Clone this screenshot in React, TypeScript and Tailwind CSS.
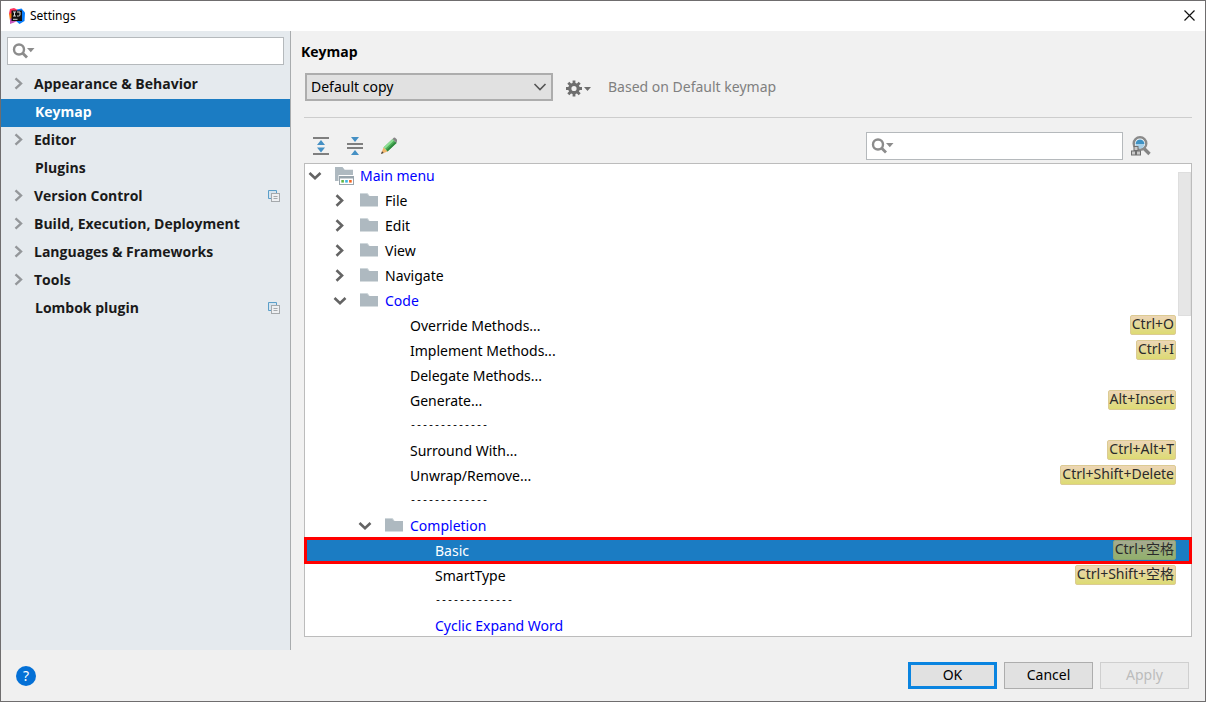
import { useState } from "react";
import clsx from "clsx";

type NavItem = {
  name: string;
  expandable?: boolean;
  project?: boolean; // per-project settings marker
};

type TreeRow = {
  text: string;
  level: number;
  kind: "root" | "folder" | "action" | "separator";
  open?: boolean;
  changed?: boolean;
  shortcut?: string;
};

const NAV: NavItem[] = [
  { name: "Appearance & Behavior", expandable: true },
  { name: "Keymap" },
  { name: "Editor", expandable: true },
  { name: "Plugins" },
  { name: "Version Control", expandable: true, project: true },
  { name: "Build, Execution, Deployment", expandable: true },
  { name: "Languages & Frameworks", expandable: true },
  { name: "Tools", expandable: true },
  { name: "Lombok plugin", project: true },
];

const ROWS: TreeRow[] = [
  { text: "Main menu", level: 0, kind: "root", open: true, changed: true },
  { text: "File", level: 1, kind: "folder" },
  { text: "Edit", level: 1, kind: "folder" },
  { text: "View", level: 1, kind: "folder" },
  { text: "Navigate", level: 1, kind: "folder" },
  { text: "Code", level: 1, kind: "folder", open: true, changed: true },
  { text: "Override Methods...", level: 2, kind: "action", shortcut: "Ctrl+O" },
  { text: "Implement Methods...", level: 2, kind: "action", shortcut: "Ctrl+I" },
  { text: "Delegate Methods...", level: 2, kind: "action" },
  { text: "Generate...", level: 2, kind: "action", shortcut: "Alt+Insert" },
  { text: "-------------", level: 2, kind: "separator" },
  { text: "Surround With...", level: 2, kind: "action", shortcut: "Ctrl+Alt+T" },
  { text: "Unwrap/Remove...", level: 2, kind: "action", shortcut: "Ctrl+Shift+Delete" },
  { text: "-------------", level: 2, kind: "separator" },
  { text: "Completion", level: 2, kind: "folder", open: true, changed: true },
  { text: "Basic", level: 3, kind: "action", changed: true, shortcut: "Ctrl+空格" },
  { text: "SmartType", level: 3, kind: "action", shortcut: "Ctrl+Shift+空格" },
  { text: "-------------", level: 3, kind: "separator" },
  { text: "Cyclic Expand Word", level: 3, kind: "action", changed: true },
];

const BRANCH_INDENT = ["pl-[2px]", "pl-[27px]", "pl-[52px]", "pl-[77px]"];
const LEAF_INDENT = ["pl-[55px]", "pl-[80px]", "pl-[105px]", "pl-[130px]"];

/** ---------------- icons ---------------- */
function AppLogo() {
  return (
    <svg width="16" height="16" viewBox="0 0 16 16" aria-hidden="true">
      <path d="M1 1 5 0 9 2 8 8 2 9 0 5.5Z" fill="#fe315d" />
      <path d="M0 6 3 5 4 11 1 12.5Z" fill="#f97a12" />
      <path d="M8 1.5 12.5.5 16 4.5 15.5 13 10.5 16 7 13Z" fill="#087cfa" />
      <path d="M1 11 4 9 8 13 5 14.5 1 16Z" fill="#c757bc" />
      <rect x="2.5" y="2.5" width="10.5" height="10.5" fill="#111" />
      <path
        d="M4 4h3M5.500 4v4M4 8h3M8 4h3v3q0 1-1.500 1H8M4 11.300h4.500"
        stroke="#d8d8d8"
        strokeWidth="1"
        fill="none"
      />
    </svg>
  );
}

function SearchIcon() {
  return (
    <svg width="24" height="18" viewBox="0 0 24 18" aria-hidden="true">
      <circle cx="7" cy="7.5" r="5" fill="none" stroke="#8c8c8c" strokeWidth="2.4" />
      <path d="m10.5 11 4.5 4.5" stroke="#8c8c8c" strokeWidth="2.8" />
      <path d="M15 6h7.5l-3.7 4.2Z" fill="#8c8c8c" />
    </svg>
  );
}

function Chevron({ open, light }: { open?: boolean; light?: boolean }) {
  return (
    <svg width="16" height="16" viewBox="0 0 16 16" className="shrink-0" aria-hidden="true">
      <path
        d={open ? "m2.500 5 5.500 5.200L13.500 5" : "m4.500 2.300 5.500 5.200-5.500 5.200"}
        fill="none"
        stroke={light ? "#94979a" : "#646464"}
        strokeWidth={light ? 2.4 : 2.6}
      />
    </svg>
  );
}

function FolderIcon() {
  return (
    <svg width="19" height="16" viewBox="0 0 19 16" className="shrink-0" aria-hidden="true">
      <path d="M0 0h7.500l2.200 2.700H0Z" fill="#cfd7db" />
      <path d="M0 1h7l2.200 2H18v10.500H0Z" fill="#aeb9c0" />
    </svg>
  );
}

function MenuFolderIcon() {
  return (
    <svg width="19" height="18" viewBox="0 0 19 18" className="shrink-0" aria-hidden="true">
      <path d="M0 0h7.5l2.2 2.7H18V8H3.5v6H0Z" fill="#aeb9c0" />
      <rect x="4.5" y="9.5" width="14" height="8" fill="#fff" stroke="#98a4ac" />
      <path d="M4 9h15v2.500H4Z" fill="#98a4ac" />
      <path d="M6.300 13h2.600v2.600H6.300Z" fill="#62b543" />
      <path d="M10.200 13h2.600v2.600h-2.600Z" fill="#40b6e0" />
      <path d="M14.100 13h2.600v2.600h-2.600Z" fill="#f26522" />
    </svg>
  );
}

function ProjectIcon() {
  return (
    <svg width="12" height="12" viewBox="0 0 12 12" aria-hidden="true">
      <path d="M3 8.500H.5V.5h8V3" fill="#d6e4ee" stroke="#5b9fc9" />
      <rect x="3.500" y="3.500" width="8" height="8" fill="#eef0f2" stroke="#a5a9ac" />
      <path d="M5.500 6.500h4M5.500 8.500h4" stroke="#a5a9ac" />
    </svg>
  );
}

function GearIcon() {
  return (
    <svg width="26" height="18" viewBox="0 0 26 18" aria-hidden="true">
      <circle cx="8" cy="8.500" r="4.200" fill="none" stroke="#6e6e6e" strokeWidth="3.200" />
      <path
        d="M8 .5V4M8 13v3.500M0 8.500h3.500M12.500 8.500H16M2.300 2.800l2.500 2.500M11.200 11.700l2.500 2.500M2.300 14.200l2.500-2.500M11.200 5.300l2.500-2.500"
        stroke="#6e6e6e"
        strokeWidth="2.800"
      />
      <path d="M18 7h7l-3.500 4Z" fill="#6e6e6e" />
    </svg>
  );
}

function ExpandAllIcon() {
  return (
    <svg width="16" height="18" viewBox="0 0 16 18" aria-hidden="true">
      <path d="M0 1h16M0 17h16" stroke="#7f7f7f" strokeWidth="2" />
      <path d="M8 3 12 8H4ZM8 15.500 12 10.500H4Z" fill="#4590c4" />
    </svg>
  );
}

function CollapseAllIcon() {
  return (
    <svg width="16" height="18" viewBox="0 0 16 18" aria-hidden="true">
      <path d="M0 7h16M0 11h16" stroke="#7f7f7f" strokeWidth="2" />
      <path d="M4 0h8L8 5ZM4 18h8l-4-5Z" fill="#4590c4" />
    </svg>
  );
}

function PencilIcon() {
  return (
    <svg width="16" height="18" viewBox="0 0 16 18" aria-hidden="true">
      <path d="M11.500 2 15.500 6l-9 8.500-4-4Z" fill="#4cae58" />
      <path d="m11.500 2 1.500 1.500-9 8.500-1.500-1.500Z" fill="#8fe096" />
      <path d="m14.200 4.700 1.300 1.300-9 8.500-1.300-1.300Z" fill="#2f8a3e" />
      <path d="m2.500 10.500 4 4L0 17Z" fill="#f0b56a" />
      <path d="M1 14.300 2.700 16 0 17Z" fill="#444" />
      <path d="m11.500 2 1.200-1.200q1-.6 2 .4l1 1q.8 1 .3 1.900L15.500 6Z" fill="#858585" />
    </svg>
  );
}

function FindShortcutIcon() {
  return (
    <svg width="20" height="20" viewBox="0 0 20 20" aria-hidden="true">
      <path d="m13 12.500 5.500 5.500" stroke="#858585" strokeWidth="3.400" />
      <circle cx="9" cy="7.500" r="6.300" fill="#fff" stroke="#8a8a8a" strokeWidth="2.400" />
      <path d="M4.500 8a4.500 4.500 0 0 1 9 0Z" fill="#3f92c4" />
      <path d="M4.500 8h9a4.500 4.500 0 0 1-9 0Z" fill="#a9d0e8" />
      <g fill="#c9c9c9" stroke="#6f6f6f">
        <rect x="3" y="10.500" width="4" height="4" />
        <rect x=".5" y="15" width="4" height="4" />
        <rect x="5.500" y="15" width="4" height="4" />
      </g>
    </svg>
  );
}

/** ---------------- parts ---------------- */
function SearchBox({ label, className }: { label: string; className?: string }) {
  return (
    <label
      className={clsx("flex h-7 items-center border border-[#b5b9bc] bg-white pl-1", className)}
    >
      <SearchIcon />
      <input type="text" aria-label={label} className="min-w-0 flex-1 outline-none" />
    </label>
  );
}

function Sidebar() {
  const [current, setCurrent] = useState("Keymap");

  return (
    <aside className="w-[290px] shrink-0 border-r border-[#a9acae] bg-[#e5eaee] pt-1.5">
      <SearchBox label="Search settings" className="mx-1.5" />
      <nav className="mt-1.5">
        {NAV.map((item) => (
          <button
            key={item.name}
            onClick={() => setCurrent(item.name)}
            className={clsx(
              "flex h-7 w-full items-center pr-2.5 pb-0.5 text-left font-['Open_Sans',sans-serif] font-bold",
              item.expandable ? "pl-2.5" : "pl-[34px]",
              item.name === current ? "bg-[#1b7cc3] text-white" : "text-[#1a1a1a]"
            )}
          >
            {item.expandable && (
              <span className="mr-[7px]">
                <Chevron light />
              </span>
            )}
            <span className="flex-1">{item.name}</span>
            {item.project && <ProjectIcon />}
          </button>
        ))}
      </nav>
    </aside>
  );
}

function Shortcut({ keys, selected }: { keys: string; selected: boolean }) {
  return (
    <kbd
      className={clsx(
        "mb-0.5 flex h-5 items-center rounded-xs border px-px pb-0.5 font-['Noto_Sans','Noto_Sans_CJK_SC',sans-serif] text-[14px] leading-4 text-[#2b2b2b]",
        selected
          ? "border-[#8fa377] bg-linear-to-b from-[#a6aa90] to-[#91b06b]"
          : "border-[#dccb93] bg-linear-to-b from-[#edd5b5] to-[#dddb72]"
      )}
    >
      {keys}
    </kbd>
  );
}

function Row({
  row,
  selected,
  onSelect,
}: {
  row: TreeRow;
  selected: boolean;
  onSelect: () => void;
}) {
  const leaf = row.kind === "action" || row.kind === "separator";

  return (
    <li
      role="treeitem"
      aria-selected={selected}
      aria-expanded={leaf ? undefined : !!row.open}
      className="relative"
    >
      <button
        onClick={onSelect}
        className={clsx(
          "flex h-[25px] w-full items-center pr-[15px] text-left",
          leaf ? LEAF_INDENT[row.level] : BRANCH_INDENT[row.level],
          selected ? "bg-[#1b7cc3] text-white" : row.changed ? "text-[#0000ff]" : "text-black"
        )}
      >
        {!leaf && (
          <>
            <Chevron open={row.open} />
            <span className="mr-1.5 ml-3">
              {row.kind === "root" ? <MenuFolderIcon /> : <FolderIcon />}
            </span>
          </>
        )}
        <span
          className={clsx(
            "flex-1",
            row.kind === "separator" && "font-['Liberation_Mono',monospace] text-[10px]"
          )}
        >
          {row.text}
        </span>
        {row.shortcut && <Shortcut keys={row.shortcut} selected={selected} />}
      </button>
      {selected && (
        <span className="pointer-events-none absolute -inset-px border-3 border-[#ff0000]" />
      )}
    </li>
  );
}

function KeymapPanel() {
  const [selected, setSelected] = useState(15);

  return (
    <main className="flex min-w-0 flex-1 flex-col bg-[#f1f1f1] px-[13px] pt-[11px] pb-[13px]">
      <h1 className="-ml-[3px] font-['Open_Sans',sans-serif] leading-5 font-bold">Keymap</h1>

      <div className="mt-[11px] flex items-center border-b border-[#cdcdcd] pb-4">
        <div className="relative ml-px w-[248px]">
          <select
            aria-label="Keymap"
            className="h-7 w-full appearance-none border-2 border-[#adadad] bg-[#e1e1e1] pl-1 outline-none"
          >
            <option>Default copy</option>
          </select>
          <svg
            width="14"
            height="8"
            viewBox="0 0 14 8"
            className="pointer-events-none absolute top-2.5 right-1.5"
            aria-hidden="true"
          >
            <path d="m1.500 1 5.500 5.500L12.500 1" fill="none" stroke="#555" strokeWidth="1.600" />
          </svg>
        </div>
        <button aria-label="Keymap actions" className="mt-1 ml-[13px]">
          <GearIcon />
        </button>
        <span className="ml-4 text-[#808080]">Based on Default keymap</span>
      </div>

      <div className="mt-3.5 flex h-[31px] items-start">
        <div className="ml-[9px] flex h-7 items-center gap-[18px]">
          <button aria-label="Expand all">
            <ExpandAllIcon />
          </button>
          <button aria-label="Collapse all">
            <CollapseAllIcon />
          </button>
          <button aria-label="Edit shortcut">
            <PencilIcon />
          </button>
        </div>
        <SearchBox label="Search actions" className="ml-auto w-[257px]" />
        <button aria-label="Find actions by shortcut" className="mt-1 mr-[41px] ml-2">
          <FindShortcutIcon />
        </button>
      </div>

      <div className="relative flex-1 border border-[#bcbcbc] bg-white">
        <ul role="tree" aria-label="Actions" className="-mt-px -mb-0.5">
          {ROWS.map((row, i) => (
            <Row key={i} row={row} selected={i === selected} onSelect={() => setSelected(i)} />
          ))}
        </ul>
        <div className="absolute top-2 right-0 h-36 w-[13px] border border-[#dedede] bg-[#e6e6e6]" />
      </div>
    </main>
  );
}

function Footer() {
  const base = "h-[27px] w-[89px] pb-0.5 leading-5";

  return (
    <footer className="flex h-[51px] items-center gap-[7px] bg-[#f0f0f0] pr-4 pl-[15px]">
      <button
        aria-label="Help"
        className="mr-auto h-5 w-5 rounded-full bg-[#0470d6] text-center text-sm leading-5 text-white"
      >
        ?
      </button>
      <button className={clsx(base, "border-3 border-[#0a84e0] bg-[#e1e1e1]")}>OK</button>
      <button className={clsx(base, "border border-[#adadad] bg-[#e1e1e1]")}>Cancel</button>
      <button disabled className={clsx(base, "border border-[#cfcfcf] bg-[#ebebeb] text-[#bcbcbc]")}>
        Apply
      </button>
    </footer>
  );
}

export default function App() {
  return (
    <div className="flex min-h-screen flex-col border border-[#6f6d6e] bg-[#f0f0f0] font-['Noto_Sans','Noto_Sans_CJK_SC',sans-serif] text-[14px] leading-5 text-black">
      <header className="flex h-[30px] items-center bg-white pr-2.5 pl-2">
        <AppLogo />
        <span className="ml-[5px] text-[12px]">Settings</span>
        <button aria-label="Close" className="ml-auto pb-0.5">
          <svg width="11" height="11" viewBox="0 0 11 11" aria-hidden="true">
            <path d="m.5.5 10 10M10.500.5l-10 10" stroke="#111" strokeWidth="1.200" />
          </svg>
        </button>
      </header>
      <div className="flex flex-1">
        <Sidebar />
        <KeymapPanel />
      </div>
      <Footer />
    </div>
  );
}
